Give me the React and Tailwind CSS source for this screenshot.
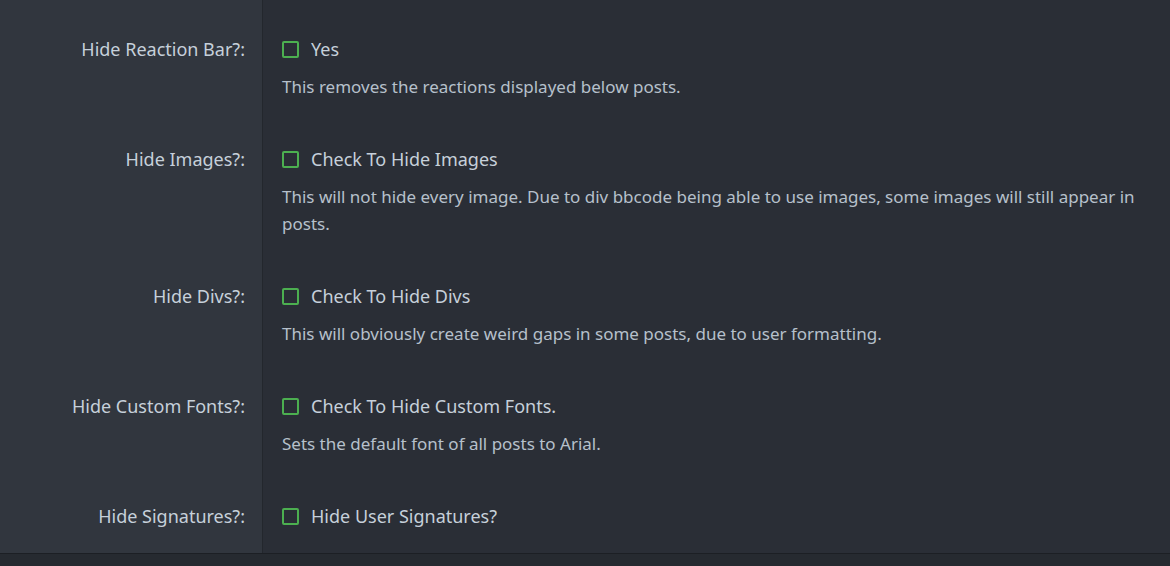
import React from "react";

const ROWS = [
  { label: "Hide Reaction Bar?:", option: "Yes", explain: "This removes the reactions displayed below posts." },
  {
    label: "Hide Images?:",
    option: "Check To Hide Images",
    explain:
      "This will not hide every image. Due to div bbcode being able to use images, some images will still appear in posts.",
  },
  { label: "Hide Divs?:", option: "Check To Hide Divs", explain: "This will obviously create weird gaps in some posts, due to user formatting." },
  { label: "Hide Custom Fonts?:", option: "Check To Hide Custom Fonts.", explain: "Sets the default font of all posts to Arial." },
  { label: "Hide Signatures?:", option: "Hide User Signatures?", explain: null },
];

function Row({ row }) {
  return (
    <div className="flex">
      <div className="w-[263px] shrink-0 text-right pr-[18px] text-[18px] leading-6 text-[#c6d0da]">
        {row.label}
      </div>
      <div className="flex-1 pl-[19px] pr-[24px]">
        <label className="flex items-center h-6 gap-[12px] text-[18px] text-[#c6d0da] cursor-pointer">
          <span className="w-[17px] h-[17px] rounded-[2px] border-2 border-[#4caf50] shrink-0"></span>
          {row.option}
        </label>
        {row.explain && (
          <p className="mt-[12px] text-[17px] leading-[27px] text-[#b6c0cb]">{row.explain}</p>
        )}
      </div>
    </div>
  );
}

export default function App() {
  return (
    <div className="w-[1170px] h-[566px] bg-[#262a30] overflow-hidden flex flex-col" style={{ fontFamily: '"Noto Sans", "Open Sans", sans-serif' }}>
      <div className="h-[553px] shrink-0 flex flex-col gap-[47px] pt-[37px] bg-[linear-gradient(to_right,#31363e_262px,#23272d_262px,#23272d_263px,#2a2e36_263px)]">
        {ROWS.map((row, i) => (
          <Row key={i} row={row} />
        ))}
      </div>
      <div className="flex-1 border-t border-[#1c1f24]"></div>
    </div>
  );
}
